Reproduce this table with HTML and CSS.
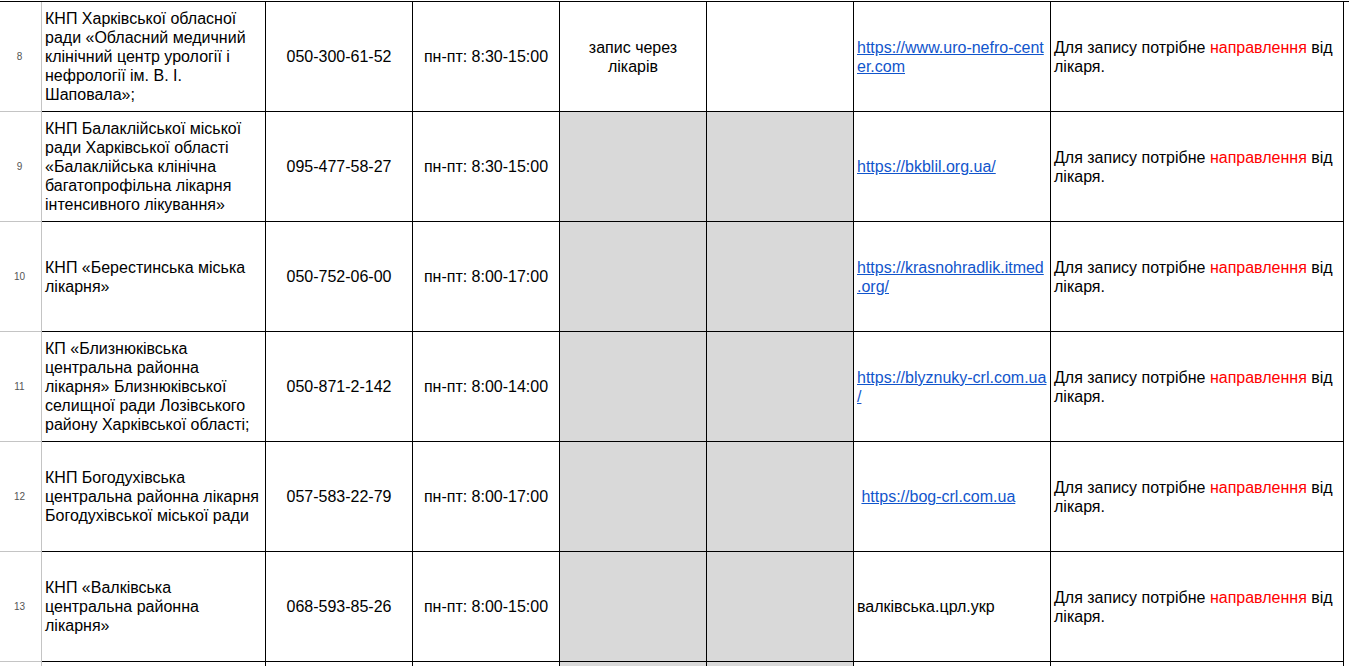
FILE: index.html
```html
<!DOCTYPE html>
<html lang="uk">
<head>
<meta charset="utf-8">
<title>Таблиця</title>
<link rel="stylesheet" href="styles.css">
</head>
<body>
<div class="sheet">
  <div class="rh">8</div>
  <div class="c"><p>КНП Харківської обласної ради «Обласний медичний клінічний центр урології і нефрології ім. В. І. Шаповала»;</p></div>
  <div class="c ctr"><p>050-300-61-52</p></div>
  <div class="c ctr"><p>пн-пт: 8:30-15:00</p></div>
  <div class="c ctr"><p>запис через<br>лікарів</p></div>
  <div class="c"></div>
  <div class="c link"><p><a href="#">https://www.uro-nefro-cent<br>er.com</a></p></div>
  <div class="c"><p>Для запису потрібне <em class="red">направлення</em> від лікаря.</p></div>

  <div class="rh">9</div>
  <div class="c"><p>КНП Балаклійської міської ради Харківської області «Балаклійська клінічна багатопрофільна лікарня інтенсивного лікування»</p></div>
  <div class="c ctr"><p>095-477-58-27</p></div>
  <div class="c ctr"><p>пн-пт: 8:30-15:00</p></div>
  <div class="c grey"></div>
  <div class="c grey"></div>
  <div class="c link"><p><a href="#">https://bkblil.org.ua/</a></p></div>
  <div class="c"><p>Для запису потрібне <em class="red">направлення</em> від лікаря.</p></div>

  <div class="rh">10</div>
  <div class="c"><p>КНП «Берестинська міська лікарня»</p></div>
  <div class="c ctr"><p>050-752-06-00</p></div>
  <div class="c ctr"><p>пн-пт: 8:00-17:00</p></div>
  <div class="c grey"></div>
  <div class="c grey"></div>
  <div class="c link"><p><a href="#">https://krasnohradlik.itmed<br>.org/</a></p></div>
  <div class="c"><p>Для запису потрібне <em class="red">направлення</em> від лікаря.</p></div>

  <div class="rh">11</div>
  <div class="c"><p>КП «Близнюківська центральна районна лікарня» Близнюківської селищної ради Лозівського району Харківської області;</p></div>
  <div class="c ctr"><p>050-871-2-142</p></div>
  <div class="c ctr"><p>пн-пт: 8:00-14:00</p></div>
  <div class="c grey"></div>
  <div class="c grey"></div>
  <div class="c link"><p><a href="#">https://blyznuky-crl.com.ua<br>/</a></p></div>
  <div class="c"><p>Для запису потрібне <em class="red">направлення</em> від лікаря.</p></div>

  <div class="rh">12</div>
  <div class="c"><p>КНП Богодухівська центральна районна лікарня Богодухівської міської ради</p></div>
  <div class="c ctr"><p>057-583-22-79</p></div>
  <div class="c ctr"><p>пн-пт: 8:00-17:00</p></div>
  <div class="c grey"></div>
  <div class="c grey"></div>
  <div class="c link"><p>&nbsp;<a href="#">https://bog-crl.com.ua</a></p></div>
  <div class="c"><p>Для запису потрібне <em class="red">направлення</em> від лікаря.</p></div>

  <div class="rh">13</div>
  <div class="c"><p>КНП «Валківська центральна районна лікарня»</p></div>
  <div class="c ctr"><p>068-593-85-26</p></div>
  <div class="c ctr"><p>пн-пт: 8:00-15:00</p></div>
  <div class="c grey"></div>
  <div class="c grey"></div>
  <div class="c"><p>валківська.црл.укр</p></div>
  <div class="c"><p>Для запису потрібне <em class="red">направлення</em> від лікаря.</p></div>

  <div class="rh"></div>
  <div class="c"></div>
  <div class="c"></div>
  <div class="c"></div>
  <div class="c grey"></div>
  <div class="c grey"></div>
  <div class="c"></div>
  <div class="c"></div>
</div>
</body>
</html>
```
FILE: styles.css
```css
html, body {
  margin: 0;
  padding: 0;
  background: #fff;
  overflow: hidden;
}
body {
  padding-top: 1px;
  font-family: "Liberation Sans", Arial, sans-serif;
  font-size: 16px;
  line-height: 19px;
  color: #000;
}
p {
  margin: 0;
}
.sheet {
  display: grid;
  grid-template-columns: 42px 224px 147px 147px 147px 147px 197px 293px;
  grid-template-rows: repeat(6, 110px) 10px;
  border-top: 1px solid #000;
}
.rh {
  border-right: 1px solid #c4c4c4;
  border-bottom: 1px solid #c4c4c4;
  font-size: 10px;
  color: #555;
  display: flex;
  align-items: center;
  justify-content: center;
  padding-right: 2px;
}
.c {
  border-right: 1px solid #000;
  border-bottom: 1px solid #000;
  padding: 0 3px;
  display: flex;
  align-items: center;
  overflow: hidden;
}
.ctr {
  justify-content: center;
  text-align: center;
}
.link {
  white-space: nowrap;
  padding-right: 0;
}
.c a {
  color: #1155cc;
  text-decoration: underline;
}
.grey {
  background: #d9d9d9;
}
.red {
  color: #ff0000;
  font-style: normal;
}
```
